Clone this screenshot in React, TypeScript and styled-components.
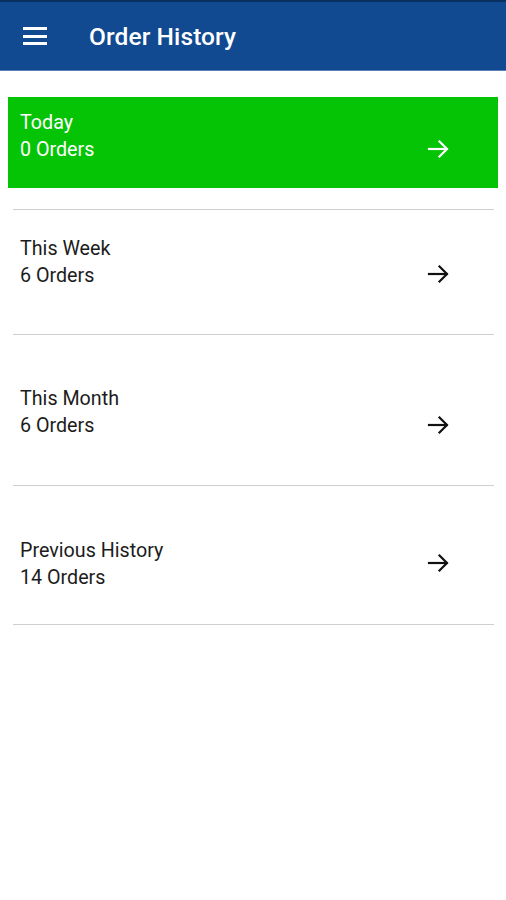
import React from 'react';
import styled, { createGlobalStyle } from 'styled-components';

const GlobalStyle = createGlobalStyle`
    html, body {
        margin: 0;
        padding: 0;
        background: #ffffff;
        font-family: Roboto, "Liberation Sans", sans-serif;
    }
`;

const Page = styled.div`
    width: 506px;
    min-height: 900px;
    background: #ffffff;
`;

const TopBar = styled.header`
    height: 68px;
    border-top: 2px solid #0a2f61;
    border-bottom: 1px solid #5b7fb6;
    background: #114a91;
    display: flex;
    align-items: center;
    padding-left: 23px;
    box-sizing: content-box;
`;

const MenuButton = styled.div`
    width: 24px;
    height: 18px;
    display: flex;
    flex-direction: column;
    justify-content: space-between;
    margin-right: 42px;

    span {
        display: block;
        height: 3px;
        background: #ffffff;
    }
`;

const Title = styled.h1`
    margin: 0;
    color: #ffffff;
    font-size: 24.5px;
    font-weight: 500;
    letter-spacing: 0.1px;
`;

const List = styled.div`
    padding: 26px 8px 0 8px;
    display: flex;
    flex-direction: column;
`;

const Row = styled.div<{ $active?: boolean; $height: number; $padTop: number }>`
    display: flex;
    justify-content: space-between;
    align-items: flex-start;
    height: ${(p) => p.$height}px;
    padding: ${(p) => p.$padTop}px ${(p) => (p.$active ? 48 : 44)}px 0 ${(p) => (p.$active ? 12 : 7)}px;
    box-sizing: border-box;
    background: ${(p) => (p.$active ? '#05c405' : 'transparent')};
    color: ${(p) => (p.$active ? '#ffffff' : '#1c1c1c')};
    margin: ${(p) => (p.$active ? '0 0 21px 0' : '0 4px 0 5px')};
    border-top: ${(p) => (p.$active ? 'none' : '1px solid #cfcfcf')};
`;

const Text = styled.div`
    font-size: 19.7px;
    line-height: 27px;
`;

const Arrow = styled.svg<{ $top: number }>`
    width: 24px;
    height: 24px;
    margin-top: ${(p) => p.$top}px;
    flex-shrink: 0;
`;

const Divider = styled.div`
    height: 1px;
    margin: 0 4px 0 5px;
    background: #cfcfcf;
`;

type Item = {
    title: string;
    count: string;
    height: number;
    padTop: number;
    arrowTop: number;
    active?: boolean;
};

const items: Item[] = [
    { title: 'Today', count: '0 Orders', height: 91, padTop: 12, arrowTop: 28, active: true },
    { title: 'This Week', count: '6 Orders', height: 125, padTop: 25, arrowTop: 27 },
    { title: 'This Month', count: '6 Orders', height: 151, padTop: 50, arrowTop: 28 },
    { title: 'Previous History', count: '14 Orders', height: 139, padTop: 51, arrowTop: 14 },
];

const ArrowIcon = ({ color, top }: { color: string; top: number }) => (
    <Arrow $top={top} viewBox="0 0 24 24" fill="none" stroke={color} strokeWidth={2.2} strokeLinecap="square">
        <path d="M3 12h17.5" />
        <path d="M13.5 4.5l7.5 7.5-7.5 7.5" strokeLinejoin="miter" />
    </Arrow>
);

export default function App() {
    return (
        <Page>
            <GlobalStyle />
            <TopBar>
                <MenuButton>
                    <span />
                    <span />
                    <span />
                </MenuButton>
                <Title>Order History</Title>
            </TopBar>
            <List>
                {items.map((it) => (
                    <Row key={it.title} $active={it.active} $height={it.height} $padTop={it.padTop}>
                        <Text>
                            {it.title}
                            <br />
                            {it.count}
                        </Text>
                        <ArrowIcon color={it.active ? '#ffffff' : '#111111'} top={it.arrowTop} />
                    </Row>
                ))}
                <Divider />
            </List>
        </Page>
    );
}
